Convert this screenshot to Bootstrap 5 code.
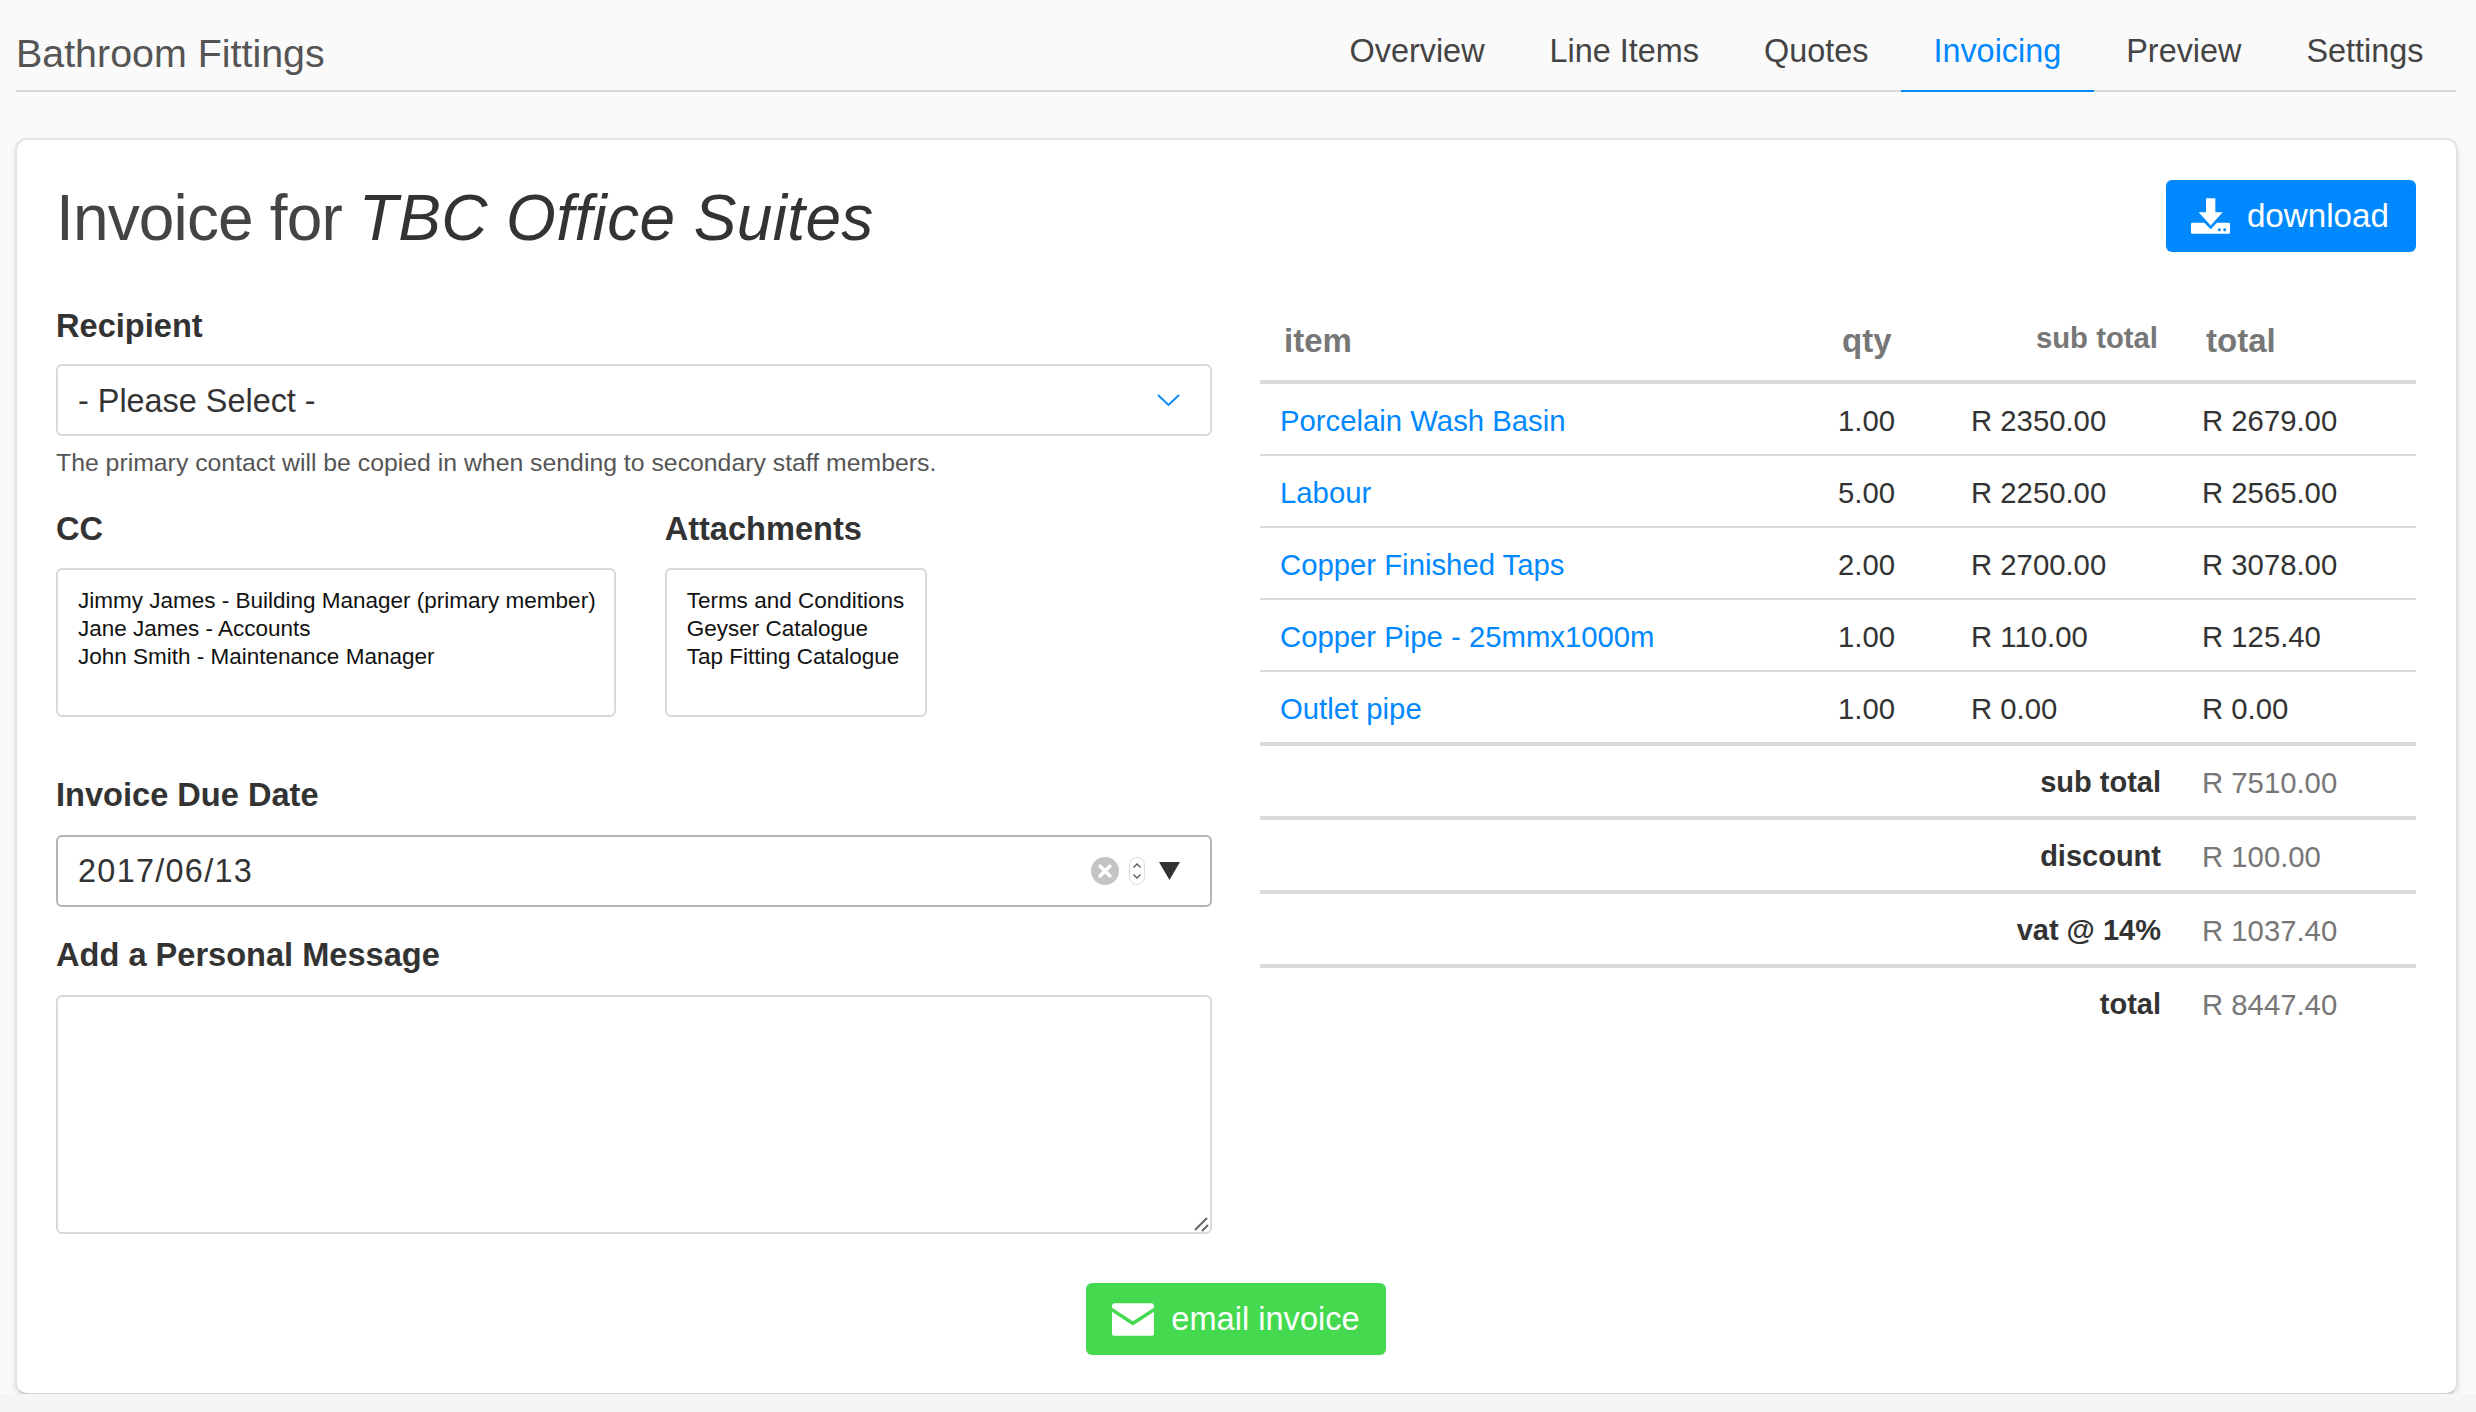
<!DOCTYPE html>
<html lang="en">
<head>
<meta charset="utf-8">
<title>Invoice for TBC Office Suites</title>
<link href="https://cdn.jsdelivr.net/npm/bootstrap@5.3.0/dist/css/bootstrap.min.css" rel="stylesheet">
<style>
html{background:#f5f5f5;height:100%}
body{height:1394px;background:#fafafa;color:#333;font-family:"Liberation Sans",Arial,sans-serif;font-size:30px;padding:0 18px 0 15px;overflow:hidden}
.top-bar{border-bottom:2px solid #d9d9d9;height:92px;flex-wrap:nowrap;margin:0 2px 0 1px}
.top-brand{font-size:39.4px;line-height:48px;color:#555;padding:26.5px 0 15.5px;margin:0 0 -2px}
.top-brand:hover{color:#555}
.top-link{display:block;font-size:32.4px;line-height:40px;color:#444;padding:31px 32.5px 19px;border-bottom:2px solid transparent;margin-bottom:-2px}
.top-link:hover{color:#444}
.top-link.active,.top-link.active:hover{color:#08f;border-bottom-color:#08f}
.sheet{margin-top:46px;height:1257px;border:2px solid #e3e3e3;border-bottom-color:#cfcfcf;border-radius:12px;box-shadow:0 3px 6px rgba(0,0,0,.1);background:#fff}
.sheet-body{padding:40px 40px 39px 39px}
.sheet-head{height:72px;margin-bottom:52px}
.sheet-title{font-size:64px;font-weight:400;line-height:72px;padding-top:3px;margin:0;color:#444;letter-spacing:-.85px}
.sheet-title em{letter-spacing:.37px;color:#333}
.act-btn{height:72px;border:0;border-radius:6px;color:#fff;font-size:32.6px;line-height:40px;padding:0 26px;gap:17px}
.act-blue,.act-blue:hover{background:#08f;color:#fff;font-size:33.2px;padding:0 27px 0 25px}
.act-green,.act-green:hover{background:#44d94f;color:#fff}
.split{--bs-gutter-x:48px}
.fld-label{display:block;font-size:32.6px;font-weight:700;line-height:40px;margin:0 0 20px;color:#333}
.fld-first{padding-top:1.5px;margin-bottom:18.5px}
.fld-cap{margin-bottom:19px}
.fld-select{height:72px;border:2px solid #d9d9d9;border-radius:6px;color:#333;font-size:32.4px;padding:3px 20px 0;background-size:23px 12px;background-position:right 30px center;background-image:url("data:image/svg+xml,%3Csvg xmlns='http://www.w3.org/2000/svg' viewBox='0 0 23 12'%3E%3Cpath d='M1 1l10.500 10L22 1' fill='none' stroke='%2308f' stroke-width='1.800'/%3E%3C/svg%3E")}
.fld-help{font-size:24.8px;line-height:34px;color:#555;margin:9.5px 0 29.5px}
.pick-row{gap:49px;margin-bottom:58px}
.pick-box{height:149px;border:2px solid #d9d9d9;border-radius:6px;padding:16.5px 18px 15px 20px;font-size:22.5px;line-height:28px;color:#111;white-space:nowrap}
.pick-box-wide{padding-right:21px}
.date-wrap{margin-bottom:28px}
.fld-date{height:72px;border:2px solid #b4b4b4;border-radius:6px;font-size:32.4px;letter-spacing:1.3px;color:#333;padding:0 20px}
.date-tools{top:0;right:32px;height:72px;gap:10px}
.fld-msg{height:239px;border:2px solid #d9d9d9;border-radius:6px;resize:none}
.grip{right:3px;bottom:2px;pointer-events:none}
.inv-table{border-collapse:separate;border-spacing:0;table-layout:fixed;margin:0;font-size:29.3px;--bs-table-color:#333;--bs-table-bg:transparent}
.inv-table.table>*>*>*{padding:3px 20px 0;vertical-align:middle;border-bottom:2px solid #d9d9d9;box-shadow:none}
.inv-table.table>thead>tr>th{vertical-align:bottom;font-size:33px;line-height:38px;padding:0 0 20px 24px;color:#777;border-bottom:4px solid #d9d9d9;height:80px}
.inv-table.table>thead>tr>th.th-sub{font-size:29.3px;text-align:right;padding:0 24px 23px 0}
.inv-table>tbody>tr>td{height:72px}
.inv-table.table>tbody>tr.row-end>td{border-bottom-width:4px;height:74px}
.inv-table.table>tbody>tr.row-sum>td{height:74px;border-bottom-width:4px}
.inv-table.table>tbody>tr.row-last>td{border-bottom:0;height:70px}
.inv-table a{color:#08f;text-decoration:none}
.inv-table.table>tbody>tr>td.sum-key{font-weight:700;font-size:29px;text-align:right;padding-right:21px}
.inv-table.table>tbody>tr>td.sum-val{color:#777}
.send-row{margin-top:49px}
</style>
</head>
<body>
<nav class="navbar top-bar p-0 align-items-end">
  <a class="navbar-brand top-brand" href="#">Bathroom Fittings</a>
  <ul class="nav flex-nowrap">
    <li class="nav-item"><a class="top-link text-decoration-none" href="#">Overview</a></li>
    <li class="nav-item"><a class="top-link text-decoration-none" href="#">Line Items</a></li>
    <li class="nav-item"><a class="top-link text-decoration-none" href="#">Quotes</a></li>
    <li class="nav-item"><a class="top-link text-decoration-none active" href="#">Invoicing</a></li>
    <li class="nav-item"><a class="top-link text-decoration-none" href="#">Preview</a></li>
    <li class="nav-item"><a class="top-link text-decoration-none" href="#">Settings</a></li>
  </ul>
</nav>
<main class="card sheet">
  <div class="card-body sheet-body">
    <div class="d-flex justify-content-between align-items-center sheet-head">
      <h1 class="sheet-title">Invoice for <em>TBC Office Suites</em></h1>
      <a class="btn act-btn act-blue d-inline-flex align-items-center" href="#">
        <svg width="39" height="36" viewBox="0 0 117 107" aria-hidden="true"><path fill="#fff" d="M45 0h28v42h22L59 82 23 42h22z"/><path fill="#fff" d="M4 74h36l19 19 19-19h35a4 4 0 0 1 4 4v25a4 4 0 0 1-4 4H4a4 4 0 0 1-4-4V78a4 4 0 0 1 4-4z"/><circle cx="85" cy="95" r="4.500" fill="#08f"/><circle cx="101" cy="95" r="4.500" fill="#08f"/></svg>
        <span>download</span>
      </a>
    </div>
    <div class="row split">
      <div class="col-6">
        <label class="fld-label fld-first" for="recipient">Recipient</label>
        <select class="form-select fld-select" id="recipient"><option>- Please Select -</option></select>
        <p class="fld-help">The primary contact will be copied in when sending to secondary staff members.</p>
        <div class="d-flex pick-row">
          <div>
            <div class="fld-label fld-cap">CC</div>
            <div class="pick-box">Jimmy James - Building Manager (primary member)<br>Jane James - Accounts<br>John Smith - Maintenance Manager</div>
          </div>
          <div>
            <div class="fld-label fld-cap">Attachments</div>
            <div class="pick-box pick-box-wide">Terms and Conditions<br>Geyser Catalogue<br>Tap Fitting Catalogue</div>
          </div>
        </div>
        <label class="fld-label" for="due">Invoice Due Date</label>
        <div class="position-relative date-wrap">
          <input class="form-control fld-date" id="due" type="text" value="2017/06/13">
          <div class="position-absolute d-flex align-items-center date-tools">
            <svg width="28" height="28" viewBox="0 0 28 28" aria-hidden="true"><circle cx="14" cy="14" r="14" fill="#c4c4c4"/><path d="M9 9l10 10M19 9L9 19" stroke="#fff" stroke-width="3.400" stroke-linecap="round"/></svg>
            <svg width="16" height="28" viewBox="0 0 16 28" aria-hidden="true"><rect x=".5" y=".5" width="15" height="27" rx="7.500" fill="#fff" stroke="#ddd"/><path d="M4.500 10.500L8 7l3.500 3.500M4.500 17.500L8 21l3.500-3.500" fill="none" stroke="#555" stroke-width="1.300"/></svg>
            <svg class="ms-1" width="21" height="18" viewBox="0 0 21 18" aria-hidden="true"><path d="M0 0h21L10.500 18z" fill="#333"/></svg>
          </div>
        </div>
        <label class="fld-label" for="msg">Add a Personal Message</label>
        <div class="position-relative">
          <textarea class="form-control fld-msg d-block" id="msg"></textarea>
          <svg class="position-absolute grip" width="16" height="16" viewBox="0 0 16 16" aria-hidden="true"><path d="M2 14L14 2M9 15l6-6" stroke="#666" stroke-width="2" fill="none"/></svg>
        </div>
      </div>
      <div class="col-6">
        <table class="table inv-table">
          <colgroup><col style="width:558px"><col style="width:133px"><col style="width:231px"><col style="width:234px"></colgroup>
          <thead>
            <tr><th>item</th><th>qty</th><th class="th-sub">sub total</th><th>total</th></tr>
          </thead>
          <tbody>
            <tr><td><a href="#">Porcelain Wash Basin</a></td><td>1.00</td><td>R 2350.00</td><td>R 2679.00</td></tr>
            <tr><td><a href="#">Labour</a></td><td>5.00</td><td>R 2250.00</td><td>R 2565.00</td></tr>
            <tr><td><a href="#">Copper Finished Taps</a></td><td>2.00</td><td>R 2700.00</td><td>R 3078.00</td></tr>
            <tr><td><a href="#">Copper Pipe - 25mmx1000m</a></td><td>1.00</td><td>R 110.00</td><td>R 125.40</td></tr>
            <tr class="row-end"><td><a href="#">Outlet pipe</a></td><td>1.00</td><td>R 0.00</td><td>R 0.00</td></tr>
            <tr class="row-sum"><td class="sum-key" colspan="3">sub total</td><td class="sum-val">R 7510.00</td></tr>
            <tr class="row-sum"><td class="sum-key" colspan="3">discount</td><td class="sum-val">R 100.00</td></tr>
            <tr class="row-sum"><td class="sum-key" colspan="3">vat @ 14%</td><td class="sum-val">R 1037.40</td></tr>
            <tr class="row-sum row-last"><td class="sum-key" colspan="3">total</td><td class="sum-val">R 8447.40</td></tr>
          </tbody>
        </table>
      </div>
    </div>
    <div class="d-flex justify-content-center send-row">
      <a class="btn act-btn act-green d-inline-flex align-items-center" href="#">
        <svg width="42" height="33" viewBox="0 0 127 99" aria-hidden="true"><path fill="#fff" d="M8 0h111q8 0 8 10v4L63 55 0 14v-4Q0 0 8 0z"/><path fill="#fff" d="M0 26l63 42 64-42v65q0 8-8 8H8q-8 0-8-8z"/></svg>
        <span>email invoice</span>
      </a>
    </div>
  </div>
</main>
<script src="https://cdn.jsdelivr.net/npm/bootstrap@5.3.0/dist/js/bootstrap.bundle.min.js"></script>
</body>
</html>
